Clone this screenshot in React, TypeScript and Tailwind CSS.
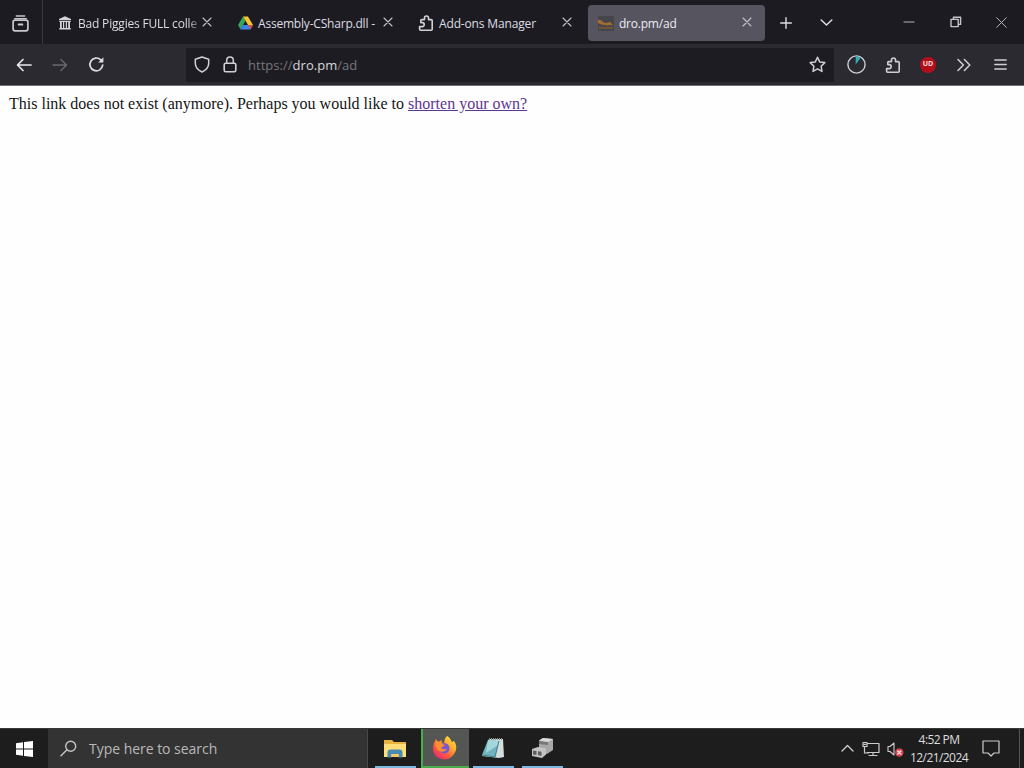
import type { ReactNode } from "react";

function Icon({ className, box = "0 0 16 16", children }: { className: string; box?: string; children: ReactNode }) {
  return (
    <svg viewBox={box} className={`block shrink-0 ${className}`} fill="none" stroke="currentColor" strokeWidth="1.4" strokeLinecap="round" strokeLinejoin="round">
      {children}
    </svg>
  );
}

const Close = ({ className = "" }: { className?: string }) => (
  <Icon className={`size-[10px] text-[#c4c3c9] ${className}`} box="0 0 10 10">
    <path d="M1 1l8 8M9 1l-8 8" strokeWidth="1.1" />
  </Icon>
);

const Puzzle = ({ className }: { className: string }) => (
  <Icon className={className}>
    <path d="M2.8 7.6V5.6a1 1 0 0 1 1-1h2.7V3a2 2 0 0 1 4 0v1.6h2.7a1 1 0 0 1 1 1v8.6a1 1 0 0 1-1 1H2.6a1 1 0 0 1-1-1v-2.6h2.6a2 2 0 0 0 0-4z" strokeWidth="1.6" />
  </Icon>
);

function TabStrip() {
  return (
    <div className="flex h-[44px] items-center bg-[#1c1b22] text-[12px] font-medium text-[#dedde3]">
      <div className="flex h-full w-[43px] shrink-0 items-center border-r border-[#3a3940] pl-[12px] pt-[2px]">
        <Icon className="size-[17px] text-[#c9c8ce]" box="0 0 17 17">
          <path d="M4.3 1h8.4M2.7 3.6h11.6" />
          <rect x="1.1" y="5.2" width="14.8" height="10.6" rx="2" strokeWidth="1.7" />
          <path d="M6.7 9.5h3.6" strokeWidth="2" />
        </Icon>
      </div>
      <div className="flex h-full w-[182px] shrink-0 items-center pl-[15px] pt-[2px]">
        <Icon className="size-[14px] text-[#d4d3d6]" box="0 0 14 14">
          <path d="M7 .2L13 3v1.3H1V3zM1.3 5h11.4v1H1.3zM2 6h1.8v6H2zM5 6h1.2v6H5zM7.8 6H9v6H7.8zM10.2 6H12v6h-1.8zM1.3 12h11.4v1.5H1.3z" fill="currentColor" stroke="none" />
        </Icon>
        <div className="ml-[6px] w-[120px] whitespace-nowrap pt-[2px] tracking-[-0.19px] [mask-image:linear-gradient(to_right,black_110px,transparent_124px)]">Bad Piggies FULL colle</div>
        <Close className="ml-[4px] -translate-y-px" />
      </div>
      <div className="flex h-full w-[181px] shrink-0 items-center pl-[13px] pt-[2px]">
        <svg viewBox="0 0 16 14" className="block h-[14px] w-[15px] shrink-0">
          <path d="M5.4 0L0 9.2 2.7 14 8 4.7z" fill="#36a657" />
          <path d="M5.4 0h5.2L16 9.2h-5.3z" fill="#f9c435" />
          <path d="M5.3 9.2H16L13.3 14H2.7z" fill="#4083ee" />
          <path d="M10.7 9.2H16L13.3 14z" fill="#dc4c3f" />
        </svg>
        <div className="ml-[5px] w-[119px] whitespace-nowrap pt-[2px] tracking-[-0.2px]">Assembly-CSharp.dll -</div>
        <Close className="ml-[6px] -translate-y-px" />
      </div>
      <div className="flex h-full w-[182px] shrink-0 items-center pl-[12px] pt-[2px]">
        <Puzzle className="size-[16px] text-[#d2d1d7]" />
        <div className="ml-[5px] w-[118px] whitespace-nowrap pt-[2px] tracking-[-0.15px]">Add-ons Manager</div>
        <Close className="ml-[5px] -translate-y-px" />
      </div>
      <div className="mt-[1px] flex h-[36px] w-[177px] shrink-0 items-center rounded-[4px] bg-[#55545f] pl-[10px] pt-px text-[#eeedf2]">
        <svg viewBox="0 0 16 15" className="block h-[15px] w-[16px] shrink-0">
          <rect width="16" height="15" rx="1" fill="#45454b" />
          <path d="M0 4c4-1 4 3 8 3l4-1 3 3c-5 0-10 1-15-2z" fill="#a36d31" />
          <path d="M1 10c5 2 10 0 14 1v2H1z" fill="#715436" />
        </svg>
        <div className="ml-[5px] w-[117px] whitespace-nowrap pt-[2px] tracking-[-0.22px]">dro.pm/ad</div>
        <Close className="ml-[6px] -translate-y-px" />
      </div>
      <Icon className="ml-[15px] mt-px size-[12px]" box="0 0 12 12"><path d="M6 .7v10.6M.7 6h10.6" /></Icon>
      <Icon className="ml-[28px] size-[13px]" box="0 0 13 13"><path d="M1.2 4l5.3 5 5.3-5" strokeWidth="1.5" /></Icon>
      <Icon className="ml-[70px] size-[12px] text-[#b5b4ba]" box="0 0 12 12"><path d="M1 6h10" strokeWidth="1.1" /></Icon>
      <Icon className="ml-[35px] size-[12px] text-[#c5c4ca]" box="0 0 12 12"><path d="M1 3.4h7.2v7.2H1zM3.4 3V1.2h7.2v7.2H8.6" /></Icon>
      <Icon className="ml-[34px] size-[11px] text-[#b5b4ba]" box="0 0 11 11"><path d="M.7.7l9.6 9.6M10.3.7L.7 10.3" strokeWidth="1" /></Icon>
    </div>
  );
}

function Toolbar() {
  return (
    <div className="flex h-[42px] items-center border-b border-[#6f6e74] bg-[#2b2a31] text-[#d0cfd4]">
      <Icon className="ml-[16px] size-[16px] text-[#e8e7ec]"><path d="M7 2.5L1.5 8 7 13.5M2 8h13" strokeWidth="1.7" /></Icon>
      <Icon className="ml-[20px] size-[16px] text-[#69686e]"><path d="M9 2.5L14.5 8 9 13.5M14 8H1" strokeWidth="1.4" /></Icon>
      <Icon className="ml-[20px] size-[17px] text-[#dedde2]" box="0 0 17 17">
        <path d="M14.7 9.2a6.4 6.4 0 1 1-1.8-5.3l1.3 1.3" strokeWidth="1.7" />
        <path d="M15.4 1.3v5.2h-5.2z" fill="currentColor" stroke="none" />
      </Icon>
      <div className="ml-[81px] flex h-[34px] w-[648px] shrink-0 items-center rounded-[2px] bg-[#1d1c22] pl-[8px]">
        <Icon className="h-[17px] w-[16px]" box="0 0 16 17"><path d="M8 1l6.7 2.3v4c0 4-2.8 6.8-6.7 8.7-3.9-1.9-6.7-4.7-6.7-8.7v-4z" strokeWidth="1.5" /></Icon>
        <Icon className="ml-[13px] h-[17px] w-[14px]" box="0 0 14 17"><rect x="1.2" y="7.3" width="11.6" height="8.5" rx="1.5" strokeWidth="1.6" /><path d="M3.7 7V4.3a3.3 3.3 0 0 1 6.6 0V7" strokeWidth="1.5" /></Icon>
        <div className="ml-[11px] w-[561px] whitespace-nowrap pt-[3px] text-[13px] tracking-[0.03px] text-[#77767c]">https://<span className="text-[#d8d7dc]">dro.pm</span>/ad</div>
        <Icon className="size-[17px]" box="0 0 17 17"><path d="M8.5 1.2l2.2 4.7 5.1.7-3.7 3.6.9 5.2-4.5-2.5L4 15.4l.9-5.2-3.7-3.6 5.1-.7z" strokeWidth="1.5" /></Icon>
      </div>
      <Icon className="ml-[13px] size-[19px]" box="0 0 19 19"><circle cx="9.5" cy="9.5" r="8.6" /><path d="M8.7 1v8.6l5.1-7z" fill="#32aeb4" stroke="none" /></Icon>
      <Puzzle className="ml-[19px] size-[16px]" />
      <div className="ml-[19px] flex size-[16px] items-center justify-center rounded-full bg-[#b50e1b] text-[7px] font-bold text-[#f5dadd]">UD</div>
      <Icon className="ml-[21px] size-[14px]" box="0 0 14 14"><path d="M1 1.5L6.4 7 1 12.5M7.4 1.5L12.8 7l-5.4 5.5" strokeWidth="1.5" /></Icon>
      <Icon className="ml-[23px] size-[13px]" box="0 0 13 13"><path d="M.9 2h11.2M.9 6.5h11.2M.9 11h11.2" strokeWidth="1.6" /></Icon>
    </div>
  );
}

function Taskbar() {
  return (
    <div className="flex h-[40px] shrink-0 items-center border-t border-[#383838] bg-[#1d1d1d]">
      <div className="flex w-[48px] shrink-0 pl-[16px]">
        <svg viewBox="0 0 17 16" className="block h-[16px] w-[17px]" fill="#fff"><path d="M0 2.2l7-1v6.3H0zM8 1.1L17 0v7.5H8zM0 8.5h7v6.3l-7-1zM8 8.5h9V16l-9-1.1z" /></svg>
      </div>
      <div className="flex h-full w-[320px] shrink-0 items-center border-r border-[#494949] bg-[#333] pl-[12px]">
        <Icon className="size-[17px] text-[#c4c4c4]" box="0 0 17 17"><circle cx="10.7" cy="6.2" r="5" /><path d="M7 9.8L1 15.8" strokeWidth="1.5" /></Icon>
        <div className="ml-[12px] text-[14px] tracking-[-0.03px] text-[#b9b9b9]">Type here to search</div>
      </div>
      <div className="ml-[7px] flex h-full w-[41px] shrink-0 flex-col items-center border-b-2 border-[#7bb7df] pr-px pt-[10px]">
        <svg viewBox="0 0 22 19" className="block h-[19px] w-[22px]">
          <path d="M0 1h8l2 2h12v15H0z" fill="#e9b13e" /><path d="M0 5h22v13H0z" fill="#ffdd78" />
          <path d="M3.5 18.5v-5a3 3 0 0 1 3-3h9a3 3 0 0 1 3 3v5h-4V15h-7v3.5z" fill="#478bb5" /><path d="M7.5 15h7v3h-7z" fill="#f6c861" />
        </svg>
      </div>
      <div className="ml-[5px] flex h-full w-[48px] shrink-0 justify-center border-b-2 border-l-2 border-[#48ad4b] bg-[#545653] pr-[3px] pt-[7px]">
        <svg viewBox="0 0 24 24" className="block size-[24px]">
          <defs>
            <linearGradient id="flame" x1="1" y1="0" x2=".2" y2="1"><stop stopColor="#fff047" /><stop offset=".4" stopColor="#ffab2d" /><stop offset=".72" stopColor="#ff553e" /><stop offset="1" stopColor="#e52480" /></linearGradient>
          </defs>
          <path d="M14 0c4 2 4 5 5 6l2-1c3 4 3 9 0 13-3 5-9 7-15 4C0 20-1 13 1 7l2-4 2 3 4-2c-1 2 0 3 2 3 1-3 0-4 3-7z" fill="url(#flame)" />
          <circle cx="11.3" cy="12.3" r="5.2" fill="#7658cf" /><path d="M3 6c3-1 5 0 6 2l3 1c-1 2-3 1-4 3 2 2 4 1 6 1-2 3-7 4-10 0-2-3-2-5-1-7z" fill="#ff8f30" />
        </svg>
      </div>
      <div className="ml-[4px] flex h-full w-[41px] shrink-0 justify-center border-b-2 border-[#7bb7df] pr-[2px] pt-[9px]">
        <svg viewBox="0 0 24 22" className="block h-[22px] w-[24px]">
          <path d="M8 1h14l1 18-5 1-17-2z" fill="#d5dddd" /><path d="M7 2l11 1-4 16-13-2z" fill="#6fb4bf" /><path d="M7 2l11 1-1 4L5 15z" fill="#a4d7da" /><path d="M8 1h13" stroke="#80968d" strokeWidth="2" strokeDasharray="1 1" /><path d="M1 17l13 2 4-16" stroke="#377e8b" fill="none" />
        </svg>
      </div>
      <div className="ml-[8px] flex h-full w-[41px] shrink-0 justify-center border-b-2 border-[#7bb7df] pt-[8px]">
        <svg viewBox="0 0 23 22" className="block h-[22px] w-[23px]">
          <path d="M8 3.5l4-2.5 10 1v11l-6 4-8-2z" fill="#a8a8a8" /><path d="M8 4l9 1v3l-9-1z" fill="#777" /><path d="M8 3.5l4-2.5 10 1-5 3z" fill="#d9d9d9" />
          <path d="M1 12l6-2 8 1.5v6L11 21l-10-2z" fill="#c4c4c4" /><path d="M2 13.5l3.5.5v4L2 17.5zM7 14.2l3.5.5v4L7 18.2z" fill="#5f5f5f" />
        </svg>
      </div>
      <Icon className="ml-[278px] size-[13px] text-[#d0d0d0]" box="0 0 13 13"><path d="M1 9l5.5-5.5L12 9" strokeWidth="1.3" /></Icon>
      <Icon className="ml-[8px] h-[16px] w-[18px] text-[#ccc]" box="0 0 18 16"><path d="M5 2.5h12v9H5M2.5 5.8V12h4M11 11.5v3M7 14.5h8M1 1.5h4v4H1zM2.3 3.4h1.3" strokeWidth="1.2" /></Icon>
      <Icon className="ml-[7px] h-[16px] w-[17px] text-[#ccc]" box="0 0 17 16">
        <path d="M1 5.5h2L7 2v12L3 10.5H1z" strokeWidth="1.1" /><circle cx="12.3" cy="11.5" r="4.2" fill="#d84250" stroke="none" /><path d="M10.7 9.9l3.2 3.2M13.9 9.9l-3.2 3.2" stroke="#f9e4e5" />
      </Icon>
      <div className="ml-[5px] w-[60px] shrink-0 whitespace-nowrap text-center text-[12px] leading-[18px] tracking-[-0.58px] text-[#ddd]"><div>4:52 PM</div><div>12/21/2024</div></div>
      <Icon className="ml-[13px] h-[17px] w-[18px] text-[#ccc]" box="0 0 18 17"><path d="M1 1h16v12h-5l-3 3-3-3H1z" strokeWidth="1.2" /></Icon>
      <div className="ml-auto mr-[4px] h-full w-px bg-[#555]" />
    </div>
  );
}

export default function App() {
  return (
    <div className="flex h-screen w-full flex-col overflow-hidden bg-[#fefefe] font-['Open_Sans','Noto_Sans',sans-serif]">
      <TabStrip />
      <Toolbar />
      <main className="min-h-0 flex-1 px-[9px] pt-[6px] font-['Liberation_Serif',serif] text-[16px] leading-[23px] text-[#151515]">
        This link does not exist (anymore). Perhaps you would like to <a href="#" className="text-[#603590] underline">shorten your own?</a>
      </main>
      <Taskbar />
    </div>
  );
}
